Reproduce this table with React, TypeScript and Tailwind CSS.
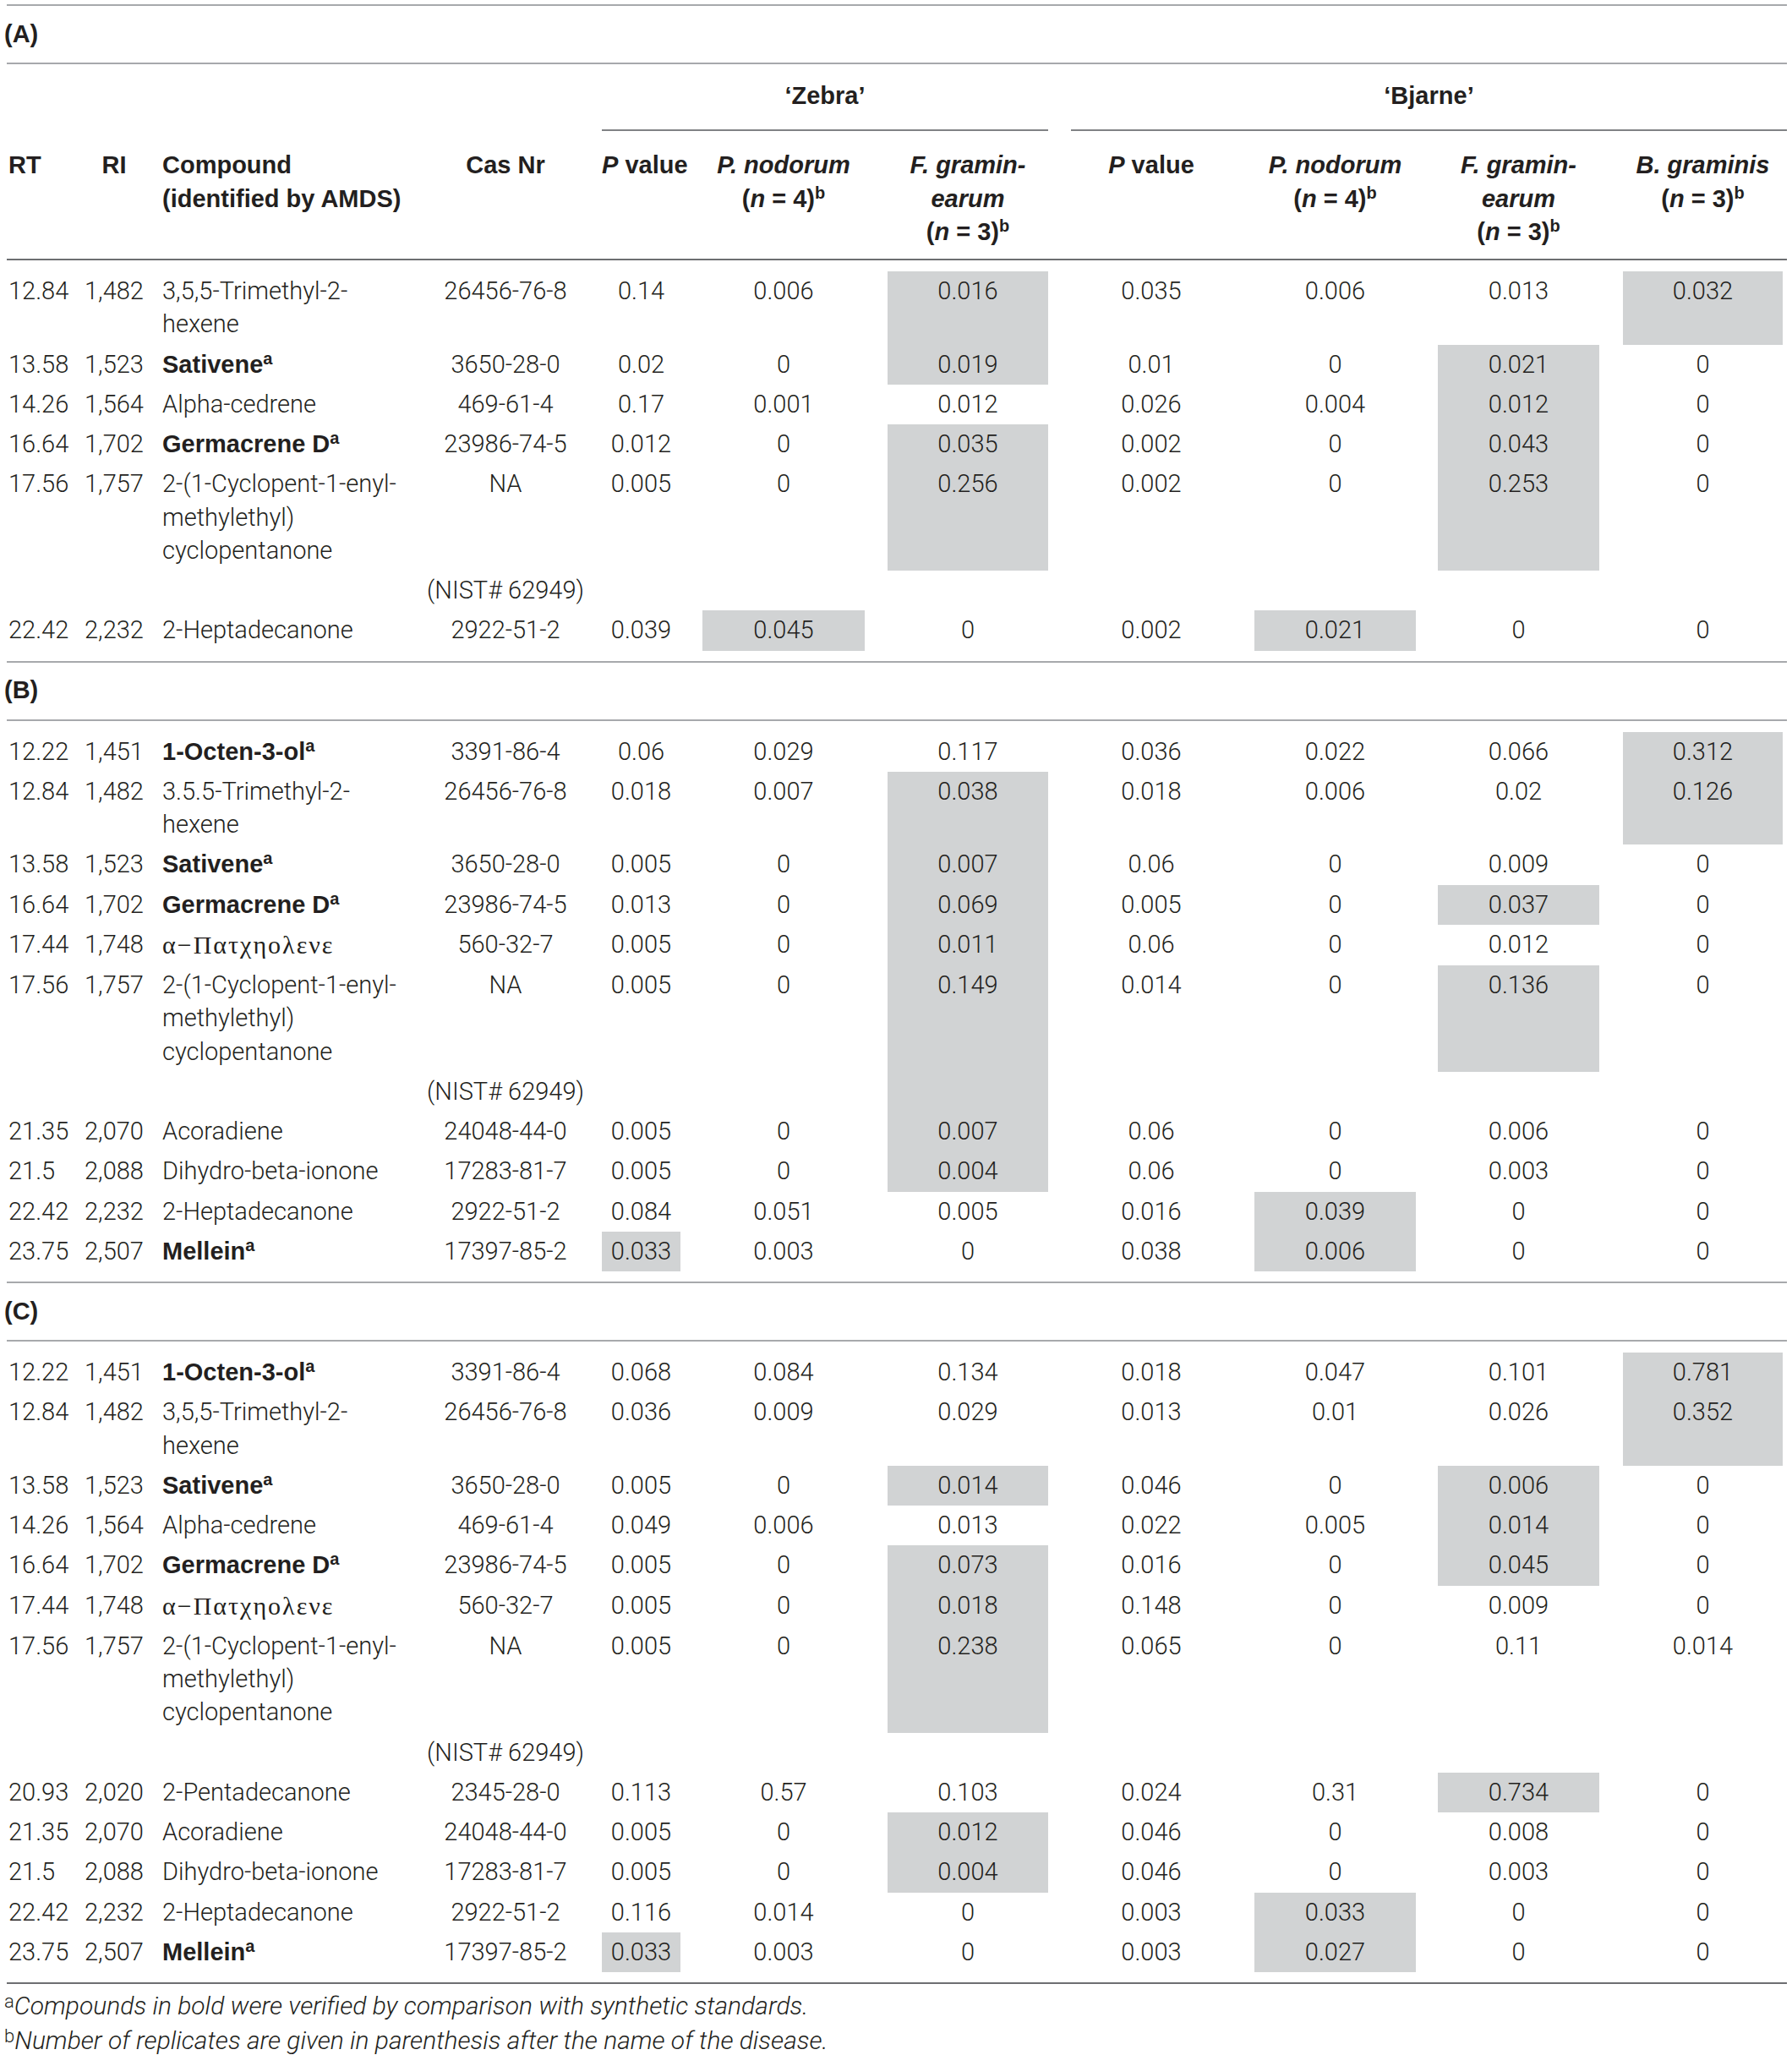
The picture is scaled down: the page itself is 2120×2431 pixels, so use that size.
import React from "react";

const GRID =
  "grid grid-cols-[74px_106px_308px_204px_105px_218px_217px_217px_218px_217px_222px]";
const SHADE = "bg-[#d1d3d4]";
const MCLS = [
  "ml-[12px]",
  "ml-[26px]",
  "ml-[27px]",
  "ml-[27px]",
  "ml-[27px]",
  "ml-[26px]",
  "ml-[28px] mr-[5px]",
];

const B = ({ children }: { children: React.ReactNode }) => (
  <span className="font-['Liberation_Sans',Arial,sans-serif] font-bold">{children}</span>
);
const Sup = ({ children }: { children: React.ReactNode }) => (
  <sup className="text-[20px] relative top-[-10px] leading-none">{children}</sup>
);
const Bold = ({ t, s }: { t: string; s?: string }) => (
  <B>
    {t}
    {s ? <Sup>{s}</Sup> : null}
  </B>
);
const Greek = () => (
  <span className="font-['Liberation_Serif',serif] tracking-[2px] text-[30px]">α−Πατχηολενε</span>
);

type Row = {
  rt?: string;
  ri?: string;
  name?: React.ReactNode;
  cas: string;
  v: string[];
  s?: number[];
};

const trimethyl = (sep: string) => (
  <>
    {`3${sep}5${sep}5-Trimethyl-2-`}
    <br />
    hexene
  </>
);
const cyclo = (
  <>
    2-(1-Cyclopent-1-enyl-
    <br />
    methylethyl)
    <br />
    cyclopentanone
  </>
);
const NIST = (s: number[] = []): Row => ({ cas: "(NIST# 62949)", v: ["", "", "", "", "", "", ""], s });

const A: Row[] = [
  { rt: "12.84", ri: "1,482", name: trimethyl(","), cas: "26456-76-8", v: ["0.14", "0.006", "0.016", "0.035", "0.006", "0.013", "0.032"], s: [2, 6] },
  { rt: "13.58", ri: "1,523", name: <Bold t="Sativene" s="a" />, cas: "3650-28-0", v: ["0.02", "0", "0.019", "0.01", "0", "0.021", "0"], s: [2, 5] },
  { rt: "14.26", ri: "1,564", name: "Alpha-cedrene", cas: "469-61-4", v: ["0.17", "0.001", "0.012", "0.026", "0.004", "0.012", "0"], s: [5] },
  { rt: "16.64", ri: "1,702", name: <Bold t="Germacrene D" s="a" />, cas: "23986-74-5", v: ["0.012", "0", "0.035", "0.002", "0", "0.043", "0"], s: [2, 5] },
  { rt: "17.56", ri: "1,757", name: cyclo, cas: "NA", v: ["0.005", "0", "0.256", "0.002", "0", "0.253", "0"], s: [2, 5] },
  NIST(),
  { rt: "22.42", ri: "2,232", name: "2-Heptadecanone", cas: "2922-51-2", v: ["0.039", "0.045", "0", "0.002", "0.021", "0", "0"], s: [1, 4] },
];

const Bs: Row[] = [
  { rt: "12.22", ri: "1,451", name: <Bold t="1-Octen-3-ol" s="a" />, cas: "3391-86-4", v: ["0.06", "0.029", "0.117", "0.036", "0.022", "0.066", "0.312"], s: [6] },
  { rt: "12.84", ri: "1,482", name: trimethyl("."), cas: "26456-76-8", v: ["0.018", "0.007", "0.038", "0.018", "0.006", "0.02", "0.126"], s: [2, 6] },
  { rt: "13.58", ri: "1,523", name: <Bold t="Sativene" s="a" />, cas: "3650-28-0", v: ["0.005", "0", "0.007", "0.06", "0", "0.009", "0"], s: [2] },
  { rt: "16.64", ri: "1,702", name: <Bold t="Germacrene D" s="a" />, cas: "23986-74-5", v: ["0.013", "0", "0.069", "0.005", "0", "0.037", "0"], s: [2, 5] },
  { rt: "17.44", ri: "1,748", name: <Greek />, cas: "560-32-7", v: ["0.005", "0", "0.011", "0.06", "0", "0.012", "0"], s: [2] },
  { rt: "17.56", ri: "1,757", name: cyclo, cas: "NA", v: ["0.005", "0", "0.149", "0.014", "0", "0.136", "0"], s: [2, 5] },
  NIST([2]),
  { rt: "21.35", ri: "2,070", name: "Acoradiene", cas: "24048-44-0", v: ["0.005", "0", "0.007", "0.06", "0", "0.006", "0"], s: [2] },
  { rt: "21.5", ri: "2,088", name: "Dihydro-beta-ionone", cas: "17283-81-7", v: ["0.005", "0", "0.004", "0.06", "0", "0.003", "0"], s: [2] },
  { rt: "22.42", ri: "2,232", name: "2-Heptadecanone", cas: "2922-51-2", v: ["0.084", "0.051", "0.005", "0.016", "0.039", "0", "0"], s: [4] },
  { rt: "23.75", ri: "2,507", name: <Bold t="Mellein" s="a" />, cas: "17397-85-2", v: ["0.033", "0.003", "0", "0.038", "0.006", "0", "0"], s: [0, 4] },
];

const C: Row[] = [
  { rt: "12.22", ri: "1,451", name: <Bold t="1-Octen-3-ol" s="a" />, cas: "3391-86-4", v: ["0.068", "0.084", "0.134", "0.018", "0.047", "0.101", "0.781"], s: [6] },
  { rt: "12.84", ri: "1,482", name: trimethyl(","), cas: "26456-76-8", v: ["0.036", "0.009", "0.029", "0.013", "0.01", "0.026", "0.352"], s: [6] },
  { rt: "13.58", ri: "1,523", name: <Bold t="Sativene" s="a" />, cas: "3650-28-0", v: ["0.005", "0", "0.014", "0.046", "0", "0.006", "0"], s: [2, 5] },
  { rt: "14.26", ri: "1,564", name: "Alpha-cedrene", cas: "469-61-4", v: ["0.049", "0.006", "0.013", "0.022", "0.005", "0.014", "0"], s: [5] },
  { rt: "16.64", ri: "1,702", name: <Bold t="Germacrene D" s="a" />, cas: "23986-74-5", v: ["0.005", "0", "0.073", "0.016", "0", "0.045", "0"], s: [2, 5] },
  { rt: "17.44", ri: "1,748", name: <Greek />, cas: "560-32-7", v: ["0.005", "0", "0.018", "0.148", "0", "0.009", "0"], s: [2] },
  { rt: "17.56", ri: "1,757", name: cyclo, cas: "NA", v: ["0.005", "0", "0.238", "0.065", "0", "0.11", "0.014"], s: [2] },
  NIST(),
  { rt: "20.93", ri: "2,020", name: "2-Pentadecanone", cas: "2345-28-0", v: ["0.113", "0.57", "0.103", "0.024", "0.31", "0.734", "0"], s: [5] },
  { rt: "21.35", ri: "2,070", name: "Acoradiene", cas: "24048-44-0", v: ["0.005", "0", "0.012", "0.046", "0", "0.008", "0"], s: [2] },
  { rt: "21.5", ri: "2,088", name: "Dihydro-beta-ionone", cas: "17283-81-7", v: ["0.005", "0", "0.004", "0.046", "0", "0.003", "0"], s: [2] },
  { rt: "22.42", ri: "2,232", name: "2-Heptadecanone", cas: "2922-51-2", v: ["0.116", "0.014", "0", "0.003", "0.033", "0", "0"], s: [4] },
  { rt: "23.75", ri: "2,507", name: <Bold t="Mellein" s="a" />, cas: "17397-85-2", v: ["0.033", "0.003", "0", "0.003", "0.027", "0", "0"], s: [0, 4] },
];

function DataRow({ r }: { r: Row }) {
  const s = r.s ?? [];
  return (
    <div className={GRID}>
      <div className="py-[4px] pl-[2px] whitespace-nowrap">{r.rt}</div>
      <div className="py-[4px] text-center whitespace-nowrap">{r.ri}</div>
      <div className="py-[4px] pl-[4px] whitespace-nowrap">{r.name}</div>
      <div className="py-[4px] text-center whitespace-nowrap">{r.cas}</div>
      {r.v.map((x, i) => (
        <div
          key={i}
          className={`py-[4px] text-center whitespace-nowrap ${MCLS[i]} ${s.includes(i) ? SHADE : ""}`}
        >
          {x}
        </div>
      ))}
    </div>
  );
}

function Label({ label }: { label: string }) {
  return (
    <div className="h-[71px] flex items-center border-y-2 border-[#a7a9ac]">
      <span className="-ml-[3px]">
        <B>{label}</B>
      </span>
    </div>
  );
}

function Body({ rows, last }: { rows: Row[]; last?: boolean }) {
  return (
    <div className={`pt-[13px] pb-[12px] ${last ? "border-b-2 border-[#6d6e71]" : ""}`}>
      {rows.map((r, i) => (
        <DataRow key={i} r={r} />
      ))}
    </div>
  );
}

const I = ({ children }: { children: React.ReactNode }) => <i className="italic">{children}</i>;

function Header() {
  const n = (k: string) => (
    <>
      (<I>n</I> = {k})<Sup>b</Sup>
    </>
  );
  const pv = (
    <>
      <I>P</I> value
    </>
  );
  const pn = (
    <>
      <I>P. nodorum</I>
      <br />
      {n("4")}
    </>
  );
  const fg = (
    <>
      <I>F. gramin-</I>
      <br />
      <I>earum</I>
      <br />
      {n("3")}
    </>
  );
  const bg = (
    <>
      <I>B. graminis</I>
      <br />
      {n("3")}
    </>
  );
  const cols = [pv, pn, fg, pv, pn, fg, bg];
  return (
    <div className="font-['Liberation_Sans',Arial,sans-serif] font-bold border-b-2 border-[#6d6e71]">
      <div className={GRID}>
        <div className="col-start-5 col-span-3 ml-[12px] pt-[18px] pb-[20px] text-center border-b-2 border-[#808285]">
          ‘Zebra’
        </div>
        <div className="col-start-8 col-span-4 ml-[27px] pt-[18px] pb-[20px] text-center border-b-2 border-[#808285]">
          ‘Bjarne’
        </div>
      </div>
      <div className={`${GRID} pt-[21px] pb-[12px]`}>
        <div className="pl-[2px]">RT</div>
        <div className="text-center">RI</div>
        <div className="pl-[4px] whitespace-nowrap">
          Compound
          <br />
          (identified by AMDS)
        </div>
        <div className="text-center">Cas Nr</div>
        {cols.map((c, i) => (
          <div key={i} className={`text-center whitespace-nowrap ${MCLS[i]}`}>
            {c}
          </div>
        ))}
      </div>
    </div>
  );
}

export default function App() {
  return (
    <div className="w-[2120px] h-[2431px] bg-white text-[#231f20] font-['Roboto','Liberation_Sans',sans-serif] font-light text-[29px] leading-[39.25px] overflow-hidden">
      <div className="ml-[8px] w-[2106px] pt-[5px]">
        <Label label="(A)" />
        <Header />
        <Body rows={A} />
        <Label label="(B)" />
        <Body rows={Bs} />
        <Label label="(C)" />
        <Body rows={C} last />
        <div className="pt-[7px] -ml-[3px] italic text-[30px] leading-[38px]">
          <div>
            <span className="not-italic text-[22px] relative top-[-8px]">a</span>
            Compounds in bold were verified by comparison with synthetic standards.
          </div>
          <div>
            <span className="not-italic text-[22px] relative top-[-8px]">b</span>
            Number of replicates are given in parenthesis after the name of the disease.
          </div>
        </div>
      </div>
    </div>
  );
}
